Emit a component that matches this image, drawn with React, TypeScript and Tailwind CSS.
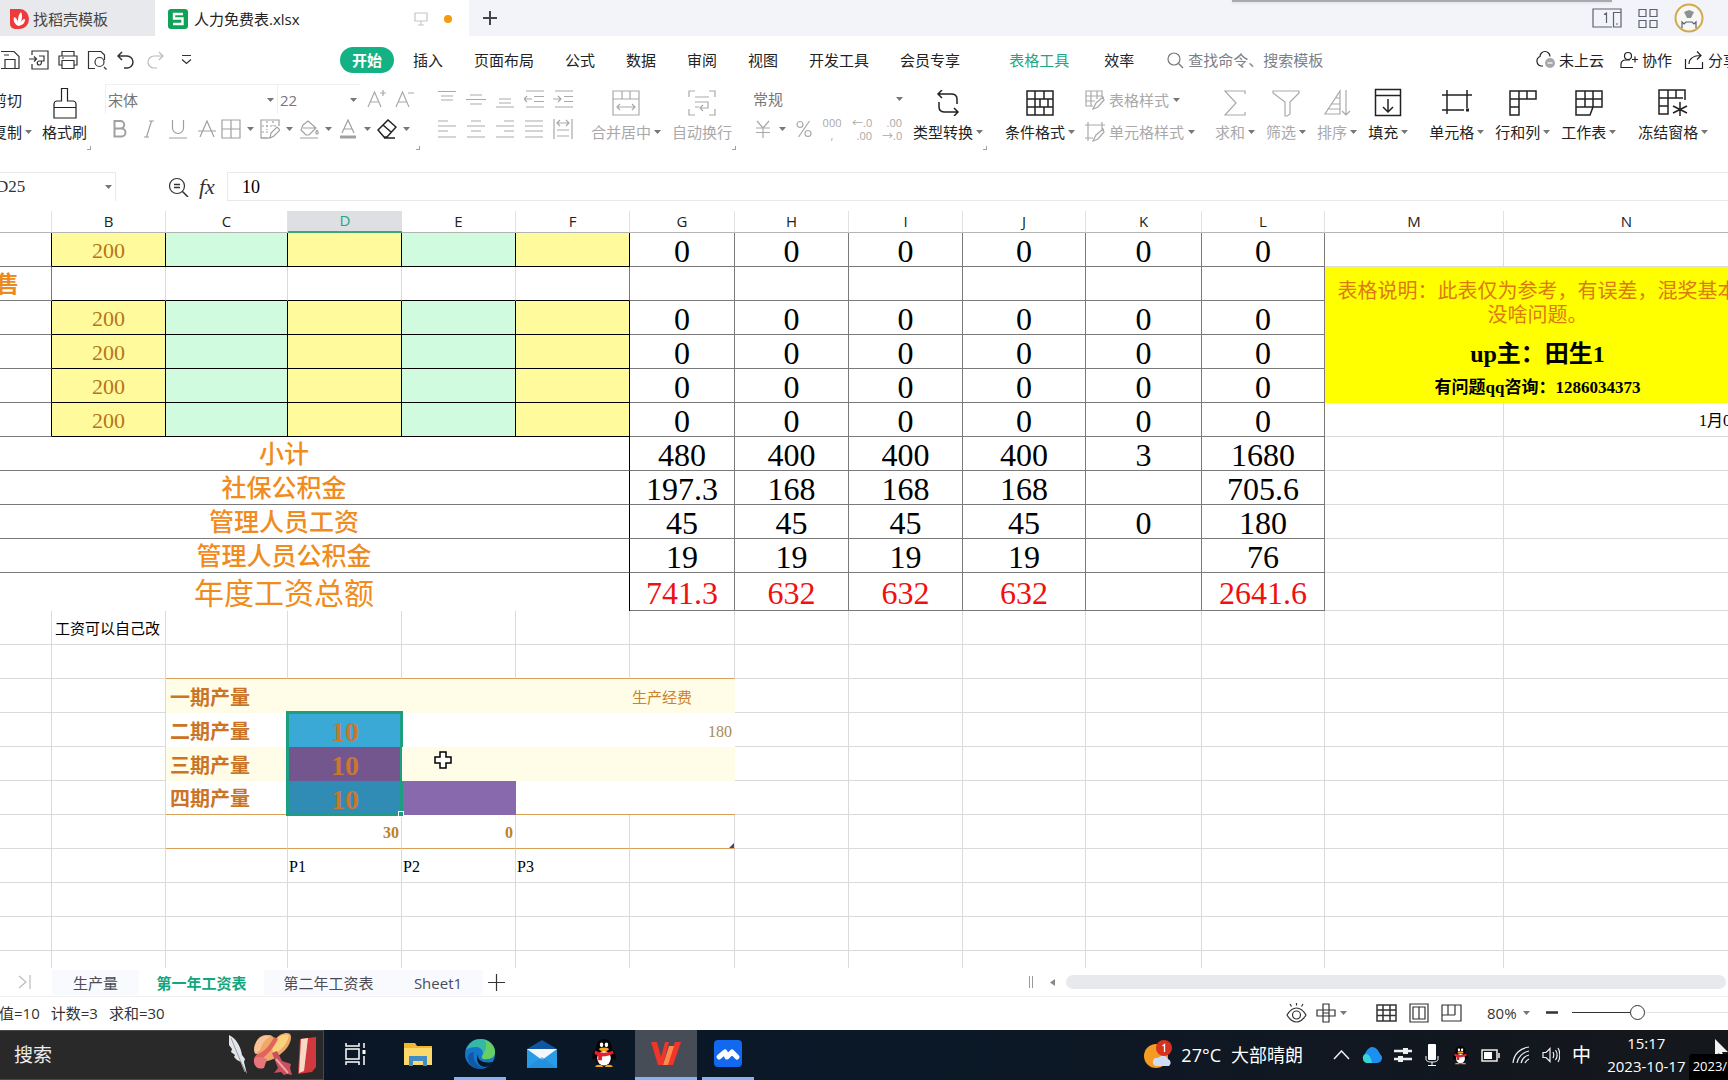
import { useState, type ReactNode } from "react";
import clsx from "clsx";

const Svg = ({
  w = 20,
  h = 20,
  children,
  className,
}: {
  w?: number;
  h?: number;
  children: ReactNode;
  className?: string;
}) => (
  <svg
    width={w}
    height={h}
    viewBox={`0 0 ${w} ${h}`}
    fill="none"
    stroke="currentColor"
    strokeWidth={1.2}
    className={clsx("shrink-0", className)}
    aria-hidden="true"
  >
    {children}
  </svg>
);

const Arrow = () => (
  <svg width="7" height="4" viewBox="0 0 7 4" className="shrink-0 text-[#777]" aria-hidden="true">
    <path d="M0 0h7L3.5 4z" fill="currentColor" />
  </svg>
);

const Tick = () => <span className="h-1 w-1 shrink-0 self-end border-r border-b border-gray-400" />;

/* ---------- title bar ---------- */

const TitleBar = () => (
  <header className="flex h-9 shrink-0 items-stretch overflow-hidden bg-[#f2f4fa]">
    <button className="flex w-[155px] shrink-0 items-center gap-1 bg-[#e8e9ed] pt-0.5 pl-[9px] text-[#444]">
      <Svg w={20} h={20}>
        <path d="M1 0h10a9 10 0 0 1 0 20H6a5 5 0 0 1-5-5z" fill="#f0393c" stroke="none" />
        <path
          d="M9.500 17C5 15 4 11 5 8c3 1 4 4 4 6 0-4 0-8 3-11 2 4 1 8-1 11 1-2 3-4 5-4 0 4-2 6-6.500 7z"
          fill="#fff"
          stroke="none"
        />
      </Svg>
      找稻壳模板
    </button>
    <button className="flex w-[314px] shrink-0 items-center bg-white pt-0.5 pl-[13px] text-[#222]">
      <Svg w={20} h={20}>
        <rect width="20" height="20" rx="3" fill="#10a256" stroke="none" />
        <path d="M15 5H6v4.500h8.500V15H5" stroke="#fff" strokeWidth="2.400" />
      </Svg>
      <span className="ml-1.5 flex-1 text-left">人力免费表.xlsx</span>
      <Svg w={14} h={14} className="text-[#c4c6cc]">
        <path d="M1 1h12v8H1zM4 13h6M7 9v4" />
      </Svg>
      <span className="mr-[17px] ml-4 h-2 w-2 rounded-full bg-[#f39c12]" />
    </button>
    <button aria-label="新建" className="ml-[14px] text-[#444]">
      <Svg w={14} h={14}>
        <path d="M7 0v14M0 7h14" strokeWidth="2" />
      </Svg>
    </button>
    <div className="flex flex-1 items-start justify-end">
      <div className="-mr-5 h-0.5 w-[380px] bg-[#a9a9ae] shadow" />
    </div>
    <div className="flex shrink-0 items-center gap-4 pr-6 text-[#5c6170]">
      <Svg w={30} h={20}>
        <path d="M20 19H1V1h28v3M12 6.500l2.500-1.500v10M21.500 4.500h7.500V19h-7.500zM24 16h2" />
      </Svg>
      <Svg w={20} h={20}>
        <path d="M1 1.500h7v7H1zM12 1.500h7v7h-7zM1 12.500h7v7H1zM12 12.500h7v7h-7z" />
      </Svg>
      <Svg w={30} h={30}>
        <circle cx="15" cy="15" r="13.500" fill="#f7f7f4" stroke="#d3a94e" strokeWidth="2" />
        <path d="M10 9l5-2 5 2-3 6h-4z" fill="#8d9196" stroke="none" />
        <path d="M8 25v-6l2 2 2-2h6l2 2 2-2v6" />
      </Svg>
    </div>
  </header>
);

/* ---------- menu row ---------- */

const MENU = [
  { label: "插入", ml: "ml-[19px]" },
  { label: "页面布局", ml: "ml-[31px]" },
  { label: "公式", ml: "ml-[31px]" },
  { label: "数据", ml: "ml-[31px]" },
  { label: "审阅", ml: "ml-[31px]" },
  { label: "视图", ml: "ml-[31px]" },
  { label: "开发工具", ml: "ml-[31px]" },
  { label: "会员专享", ml: "ml-[31px]" },
  { label: "表格工具", ml: "ml-[49px] text-[#1aa884]" },
  { label: "效率", ml: "ml-[35px]" },
];

const MenuRow = () => (
  <nav className="flex h-12 shrink-0 items-center overflow-hidden whitespace-nowrap text-[#222]">
    <div className="flex w-[340px] shrink-0 items-center gap-[9px] text-[#333]">
      <button aria-label="保存">
        <Svg>
          <path d="M1 1.500h13l5 5v12H1M5 18.500V9.500h10v9M4 5h5" />
        </Svg>
      </button>
      <button aria-label="输出为PDF">
        <Svg>
          <path d="M3 5V1h16v18H3v-5M0 9h7M5 6.500L7.500 9 5 11.500M10 6h5v5h-4.500c-3 0-3 4 0 4 2 0 2-2 2-4" />
        </Svg>
      </button>
      <button aria-label="打印">
        <Svg>
          <path d="M4 6V1.500h12V6M4 15H1V6h18v9h-3M4 10.500h12v8H4zM4 8h2" />
        </Svg>
      </button>
      <button aria-label="打印预览">
        <Svg>
          <path d="M8 18.500H1.500v-17H14l3.500 3.500v5M17 17l2.500 2.500" />
          <circle cx="12.500" cy="12" r="4.500" />
        </Svg>
      </button>
      <button aria-label="撤销">
        <Svg>
          <path d="M6 2L2 6l4 4M2 6h9a6 6 0 0 1 0 12H8" strokeWidth="1.500" />
        </Svg>
      </button>
      <button aria-label="恢复" className="text-[#bbb]">
        <Svg>
          <path d="M14 2l4 4-4 4M18 6H9a6 6 0 0 0 0 12h3" />
        </Svg>
      </button>
      <button aria-label="更多" className="ml-1">
        <Svg w={16} h={12}>
          <path d="M4 1.500h9M4 5.500l4.500 4 4.500-4" />
        </Svg>
      </button>
    </div>
    <button className="h-[26px] w-[54px] shrink-0 rounded-full bg-[#14b184] font-bold text-white">开始</button>
    {MENU.map((m) => (
      <button key={m.label} className={clsx("shrink-0", m.ml)}>
        {m.label}
      </button>
    ))}
    <label className="ml-[33px] flex flex-1 items-center gap-1 text-[#777]">
      <Svg w={17} h={17}>
        <circle cx="7" cy="7" r="6" />
        <path d="M11.500 11.500L16 16" />
      </Svg>
      <input
        className="w-[150px] outline-none placeholder:text-[#7b7f87]"
        placeholder="查找命令、搜索模板"
        aria-label="查找命令、搜索模板"
      />
    </label>
    <button className="flex shrink-0 items-center gap-1">
      <Svg>
        <path d="M8 16H6a5 5 0 0 1-1-9.500 5 5 0 0 1 10 0" />
        <circle cx="15" cy="13" r="5" fill="#a5a8ad" stroke="none" />
        <path d="M12.500 13h5" stroke="#fff" />
      </Svg>
      未上云
    </button>
    <button className="ml-4 flex shrink-0 items-center gap-1">
      <Svg w={18}>
        <circle cx="8" cy="6" r="3.500" />
        <path d="M13 17.500H1v-3c0-3 2-4.500 5-4.500h4M15 6.500v6M12 9.500h6" />
      </Svg>
      协作
    </button>
    <button className="ml-3 -mr-2.5 flex shrink-0 items-center gap-1">
      <Svg>
        <path d="M1.500 9v9.500h17V12M5 14c0-5 4-8.500 12-8.500M13 1.500l4 4-4 4" />
      </Svg>
      分享
    </button>
  </nav>
);

/* ---------- ribbon ---------- */

const BigButton = ({
  label,
  arrow = true,
  muted,
  className,
  children,
}: {
  label: string;
  arrow?: boolean;
  muted?: boolean;
  className?: string;
  children: ReactNode;
}) => (
  <button className={clsx("flex shrink-0 flex-col items-center", muted ? "text-[#a9a9a9]" : "text-[#222]", className)}>
    <span className="flex h-[38px] items-center">{children}</span>
    <span className="flex items-center gap-[3px]">
      {label}
      {arrow && <Arrow />}
    </span>
  </button>
);

const IconButton = ({ label, arrow, children }: { label: string; arrow?: boolean; children: ReactNode }) => (
  <button
    aria-label={label}
    className={clsx("flex shrink-0 items-center", arrow ? "w-[39px] gap-1.5" : "w-[29px] justify-center")}
  >
    {children}
    {arrow && <Arrow />}
  </button>
);

const DropDown = ({ label, value, className }: { label: string; value: string; className?: string }) => (
  <span className={clsx("flex h-[30px] shrink-0 items-center", className)}>
    <select aria-label={label} className="min-w-0 flex-1 appearance-none text-[#777] outline-none">
      <option>{value}</option>
    </select>
    <Arrow />
  </span>
);

const ALIGN = [
  { label: "顶端对齐", d: "M1 2.500h18M4 7h12M4 11h12" },
  { label: "垂直居中", d: "M4 6h12M0 10.500h20M4 15h12" },
  { label: "底端对齐", d: "M4 10h12M4 14h12M1 18h18" },
  { label: "减少缩进", d: "M2 2h18M10 7.500h10M10 12.500h10M2 18h18M0 10h8M3 7l-3 3 3 3" },
  { label: "增加缩进", d: "M2 2h18M11 7.500h9M11 12.500h9M2 18h18M0 10h8M5 7l3 3-3 3" },
  { label: "左对齐", d: "M1 2h10M1 7h18M1 12h10M1 18h18" },
  { label: "居中", d: "M5 2h10M1 7h18M5 12h10M1 18h18" },
  { label: "右对齐", d: "M9 2h10M1 7h18M9 12h10M1 18h18" },
  { label: "两端对齐", d: "M1 2h18M1 7h18M1 12h18M1 18h18" },
  { label: "分散对齐", d: "M1 0v20M19 0v20M4 4h12M7 1L4 4l3 3M13 1l3 3-3 3M4 11h12M4 17h12" },
];

const Ribbon = () => (
  <div className="flex h-[66px] shrink-0 items-stretch overflow-hidden whitespace-nowrap">
    <div className="flex w-[42px] shrink-0 flex-col gap-3 text-[#222]">
      <button className="-ml-2 pt-1.5 text-left">剪切</button>
      <button className="-ml-2 flex items-center gap-[3px]">
        复制
        <Arrow />
      </button>
    </div>
    <BigButton label="格式刷" arrow={false}>
      <Svg w={24} h={32}>
        <path d="M8.500 14V1.500h6V14h5.500c1.500 0 3 1.500 3 3v14H1V17c0-1.500 1.500-3 3-3zM1 20.500h22" />
      </Svg>
    </BigButton>
    <Tick />
    <div className="ml-[14px] w-[311px] shrink-0 text-[#a9a9a9]">
      <div className="flex items-center">
        <DropDown
          label="字体"
          value="宋体"
          className="w-[172px] border-t border-l border-[#f0f0f0] pr-[3px] pl-0.5"
        />
        <DropDown label="字号" value="22" className="w-[83px] border-t border-l border-[#f0f0f0] pr-[3px] pl-0.5" />
        <button aria-label="增大字号" className="ml-1.5">
          <Svg w={20}>
            <path d="M2 18L8.500 3 15 18M4.500 13h8M14 4h6M17 1v6" />
          </Svg>
        </button>
        <button aria-label="减小字号" className="ml-2">
          <Svg w={20}>
            <path d="M2 18L8.500 3 15 18M4.500 13h8M14 4h6" />
          </Svg>
        </button>
      </div>
      <div className="flex h-[30px] items-center text-[#a0a0a0]">
        <IconButton label="加粗">
          <Svg>
            <path d="M4.500 2h6a3.500 3.500 0 0 1 0 7.500h-6zM4.500 9.500h7a4 4 0 0 1 0 8h-7z" strokeWidth="2" />
          </Svg>
        </IconButton>
        <IconButton label="倾斜">
          <Svg>
            <path d="M10 2h5M5 18h5M12.500 2l-5 16" />
          </Svg>
        </IconButton>
        <IconButton label="下划线">
          <Svg>
            <path d="M4.500 1v8a5.500 5.500 0 0 0 11 0V1M1 19h18" />
          </Svg>
        </IconButton>
        <IconButton label="删除线">
          <Svg>
            <path d="M3 18L10 2l7 16M1 12h18" />
          </Svg>
        </IconButton>
        <span className="w-[3px]" />
        <IconButton label="边框" arrow>
          <Svg>
            <path d="M1 1h18v18H1zM10 1v18M1 10h18" />
          </Svg>
        </IconButton>
        <IconButton label="绘图边框" arrow>
          <Svg>
            <path d="M8 19H1V1h18v6" />
            <path d="M7 2v9M13 2v5M2 7h15M2 13h7" strokeDasharray="2 2" />
            <path d="M10 19l1-5 6-6 3 3-6 6zM1 19h10" />
          </Svg>
        </IconButton>
        <IconButton label="填充颜色" arrow>
          <Svg>
            <path d="M4 6l5-4 8 7-7 7H7l-5-5zM4 9h12M18 11c2 3 1 4 0 4s-2-1 0-4M1 19h18" />
          </Svg>
        </IconButton>
        <IconButton label="字体颜色" arrow>
          <Svg>
            <path d="M4 14L10 1l6 13M6 10h8" />
            <path d="M2 18h16" strokeWidth="3" />
          </Svg>
        </IconButton>
        <span className="text-[#222]">
          <IconButton label="清除" arrow>
            <Svg>
              <path d="M1 11L11 1l8 7-9 10H7zM6 6l8 7M7 19h11" strokeWidth="1.500" />
            </Svg>
          </IconButton>
        </span>
      </div>
    </div>
    <Tick />
    <div className="mt-[5px] ml-[17px] grid shrink-0 grid-cols-5 content-start gap-x-[9px] gap-y-2.5 text-[#a9a9a9]">
      {ALIGN.map((a) => (
        <button key={a.label} aria-label={a.label}>
          <Svg>
            <path d={a.d} />
          </Svg>
        </button>
      ))}
    </div>
    <BigButton label="合并居中" muted className="ml-[18px]">
      <Svg w={28} h={26}>
        <path d="M1 1h26v24H1zM1 9h26M10 1v8M18 1v8M5 17h18M8 14l-3 3 3 3M20 14l3 3-3 3" />
      </Svg>
    </BigButton>
    <BigButton label="自动换行" arrow={false} muted className="ml-[11px]">
      <Svg w={28} h={26}>
        <path d="M1 7V1h6M21 1h6v6M1 19v6h6M21 25h6v-6M7 7h14M7 12h13v6h-7M7 17h4M15 15l-3 3 3 3" />
      </Svg>
    </BigButton>
    <Tick />
    <div className="ml-[17px] w-[150px] shrink-0 text-[#a9a9a9]">
      <DropDown label="数字格式" value="常规" className="w-full" />
      <div className="flex h-[30px] items-center gap-2.5">
        <button aria-label="货币" className="flex items-center gap-1.5">
          <Svg w={20}>
            <path d="M4 2l6 7 6-7M10 9v10M3 9h14M3 13.500h14" />
          </Svg>
          <Arrow />
        </button>
        <button aria-label="百分比">
          <Svg w={16}>
            <circle cx="4" cy="5.500" r="3" />
            <circle cx="12" cy="14.500" r="3" />
            <path d="M13.500 2L2.500 18" />
          </Svg>
        </button>
        <button aria-label="千位分隔" className="w-5 text-[11px] leading-[13px]">
          000
          <br />,
        </button>
        <button aria-label="增加小数位" className="w-5 text-right text-[11px] leading-[13px]">
          ←.0
          <br />
          .00
        </button>
        <button aria-label="减少小数位" className="w-5 text-right text-[11px] leading-[13px]">
          .00
          <br />
          →.0
        </button>
      </div>
    </div>
    <BigButton label="类型转换" className="ml-2.5">
      <Svg w={24} h={26}>
        <path d="M6 0L2 4l4 4M2 4h13c4 0 6 2 6 5v5M18 26l4-4-4-4M22 22H9c-4 0-6-2-6-5v-5" strokeWidth="1.500" />
      </Svg>
    </BigButton>
    <Tick />
    <BigButton label="条件格式" className="ml-[18px]">
      <Svg w={28} h={26}>
        <path
          d="M1 1h26v24H1zM1 9h26M1 17h26M9 1v24M18 1v8M14 9v8M22 9v8M18 17v8"
          strokeWidth="1.500"
        />
      </Svg>
    </BigButton>
    <div className="ml-2.5 flex w-[110px] shrink-0 flex-col gap-3 text-[#a9a9a9]">
      <button className="flex items-center gap-1 pt-1.5">
        <Svg>
          <path d="M8 16H1V1h16v6M1 6h16M1 11h9M6 1v15M12 1v8M8 19l3-6 7-6 1 3-6 7z" />
        </Svg>
        表格样式
        <Arrow />
      </button>
      <button className="flex items-center gap-1">
        <Svg>
          <path d="M3 0v19M0 3h20M17 0v7M0 16h8M8 19l3-6 7-6 1 3-6 7z" />
        </Svg>
        单元格样式
        <Arrow />
      </button>
    </div>
    <BigButton label="求和" muted className="ml-5">
      <Svg w={24} h={28}>
        <path d="M22 5V2H2l11 12L2 26h20v-3" />
      </Svg>
    </BigButton>
    <BigButton label="筛选" muted className="ml-[11px]">
      <Svg w={28} h={28}>
        <path d="M1 2h26v2l-9 9v12l-3 2h-2V13L1 4z" />
      </Svg>
    </BigButton>
    <BigButton label="排序" muted className="ml-[11px]">
      <Svg w={28} h={28}>
        <path d="M17 2v23H2zM13 9h4M9 15h8M6 20h11M23 1v25M19 22l4 4 4-4" />
      </Svg>
    </BigButton>
    <BigButton label="填充" className="ml-[11px]">
      <Svg w={28} h={30}>
        <path d="M1.500 1.500h25v26h-25zM1.500 7.500h25M14 11v13M9 19l5 5 5-5" strokeWidth="1.500" />
      </Svg>
    </BigButton>
    <BigButton label="单元格" className="ml-[21px]">
      <Svg w={30} h={26}>
        <path d="M5 0v24M25 0v18M0 5h30M0 20h22" strokeWidth="1.500" />
        <path d="M24 20h3" strokeWidth="3" />
      </Svg>
    </BigButton>
    <BigButton label="行和列" className="ml-[11px]">
      <Svg w={28} h={26}>
        <path d="M1 1h26v8H10v16H1zM1 9h9M1 17h9M10 1v8M18 1v8" strokeWidth="1.500" />
      </Svg>
    </BigButton>
    <BigButton label="工作表" className="ml-[11px]">
      <Svg w={28} h={26}>
        <path d="M1 1h26v16H18l-3 8H1zM1 9h26M1 17h17M10 1v16M18 1v16" strokeWidth="1.500" />
      </Svg>
    </BigButton>
    <BigButton label="冻结窗格" className="ml-[22px]">
      <Svg w={30} h={28}>
        <path
          d="M27 11V1H1v24h9V1M1 9h24M1 17h9M18 1v8M22 13v14M15 17l14 7M29 17l-14 7"
          strokeWidth="1.500"
        />
      </Svg>
    </BigButton>
  </div>
);

const FormulaBar = () => (
  <div className="mt-[22px] mb-2.5 flex h-[29px] shrink-0 items-stretch text-[#333]">
    <label className="flex w-[116px] shrink-0 items-center overflow-hidden border-t border-r border-[#e9e9e9]">
      <input
        aria-label="名称框"
        defaultValue="D25"
        className="-ml-1 w-[109px] font-['Liberation_Serif',serif] text-[17px] outline-none"
      />
      <Arrow />
    </label>
    <button aria-label="浏览公式结果" className="ml-[52px]">
      <Svg w={21}>
        <circle cx="9" cy="9" r="7.500" />
        <path d="M14.500 14.500L20 20M6 7.500h6M6 10.500h6" strokeWidth="1.500" />
      </Svg>
    </button>
    <button className="ml-2.5 font-['Liberation_Serif',serif] text-[22px] italic">fx</button>
    <input
      aria-label="编辑栏"
      defaultValue="10"
      className="ml-3 min-w-0 flex-1 border border-r-0 border-[#e9e9e9] pl-3.5 font-['Liberation_Serif',serif] text-[18px] text-black outline-none"
    />
  </div>
);

/* ---------- sheet ---------- */

const COLUMNS = [
  { name: "A", w: "w-[113px]" },
  { name: "B", w: "w-[114px]" },
  { name: "C", w: "w-[122px]" },
  { name: "D", w: "w-[114px]" },
  { name: "E", w: "w-[114px]" },
  { name: "F", w: "w-[114px]" },
  { name: "G", w: "w-[105px]" },
  { name: "H", w: "w-[114px]" },
  { name: "I", w: "w-[114px]" },
  { name: "J", w: "w-[123px]" },
  { name: "K", w: "w-[116px]" },
  { name: "L", w: "w-[123px]" },
  { name: "M", w: "w-[179px]" },
  { name: "N", w: "w-[246px]" },
];

const light = "border-r border-b border-[#dadada]";
const dark = "border-r border-b border-[#7a7a7a]";
const black = "border-r border-b border-black";
const amber = "border-r border-b border-r-[#dadada] border-b-[#d9a05a]";

const Light = ({ count }: { count: number }) => (
  <>
    {Array.from({ length: count }, (_, i) => (
      <td key={i} className={light} />
    ))}
  </>
);

const Figures = ({ values, red }: { values: string[]; red?: boolean }) => (
  <>
    {values.map((v, i) => (
      <td
        key={i}
        className={clsx(dark, "text-center text-[32px] leading-[30px]", red ? "text-[#f01010]" : "text-black")}
      >
        {v}
      </td>
    ))}
  </>
);

const ZEROS = ["0", "0", "0", "0", "0", "0"];

// one staff row: base pay in B, then the alternating input cells
const StaffRow = ({ children }: { children?: ReactNode }) => (
  <tr className="h-[34px]">
    <td className="border-r border-b border-r-black border-b-[#7a7a7a]" />
    <td className={clsx(black, "bg-[#fffb9c] text-center text-[22px] leading-[22px] text-[#b8741a]")}>200</td>
    <td className={clsx(black, "bg-[#d0fbdf]")} />
    <td className={clsx(black, "bg-[#fffb9c]")} />
    <td className={clsx(black, "bg-[#d0fbdf]")} />
    <td className={clsx(black, "bg-[#fffb9c]")} />
    <Figures values={ZEROS} />
    {children}
  </tr>
);

const SUMMARY = [
  { label: "小计", values: ["480", "400", "400", "400", "3", "1680"] },
  { label: "社保公积金", values: ["197.3", "168", "168", "168", "", "705.6"] },
  { label: "管理人员工资", values: ["45", "45", "45", "45", "0", "180"] },
  { label: "管理人员公积金", values: ["19", "19", "19", "19", "", "76"] },
];

const periodLabel = "pl-1 text-[20px] leading-5 font-bold text-[#cb7426]";
const picked = "text-center text-[28px] leading-7 font-bold text-[#c87830]";

const CellCursor = () => (
  <svg className="absolute top-1 left-8" width="18" height="18" viewBox="0 0 18 18" aria-hidden="true">
    <path d="M6 1h6v5h5v6h-5v5H6v-5H1V6h5z" fill="#fff" stroke="#000" strokeWidth="1.500" />
  </svg>
);

const Sheet = () => (
  <main className="min-h-0 flex-1 overflow-hidden font-['Liberation_Serif','Noto_Sans_CJK_SC',serif]">
    <table className="-ml-[61px] w-[1811px] table-fixed border-separate border-spacing-0">
      <colgroup>
        {COLUMNS.map((c) => (
          <col key={c.name} className={c.w} />
        ))}
      </colgroup>
      <thead>
        <tr className="h-[22px] font-['Open_Sans',sans-serif] text-[15px] leading-[18px] text-[#222]">
          {COLUMNS.map((c) => (
            <th
              key={c.name}
              className={clsx(
                "pb-0.5 text-center font-normal",
                c.name === "D"
                  ? "border-b-2 border-[#3fa877] bg-[#dedfe2] text-[#21a687]"
                  : "border-r border-b border-r-[#e2e2e2] border-b-[#b4b4b4]",
              )}
            >
              {c.name}
            </th>
          ))}
        </tr>
      </thead>
      <tbody className="[&_td]:pt-[3px] [&_td]:whitespace-nowrap">
        <StaffRow>
          <Light count={2} />
        </StaffRow>
        <tr className="h-[34px]">
          <td className={clsx(dark, "pl-0.5 text-center text-[23px] leading-6 font-bold text-[#ec8a1c]")}>销售</td>
          {["B", "C", "D", "E"].map((c) => (
            <td key={c} className="border-r border-b border-r-[#dadada] border-b-black" />
          ))}
          <td className="border-r border-b border-r-[#7a7a7a] border-b-black" />
          <Figures values={["", "", "", "", "", ""]} />
          <td
            colSpan={2}
            rowSpan={2}
            className="bg-[#ffff00] text-center align-middle text-[20px] leading-6 text-[#dd7a10]"
          >
            表格说明：此表仅为参考，有误差，混奖基本
            <br />
            没啥问题。
          </td>
        </tr>
        <StaffRow />
        <StaffRow>
          <td colSpan={2} className="bg-[#ffff00] text-center text-[24px] leading-6 font-bold text-black">
            up主：田生1
          </td>
        </StaffRow>
        <StaffRow>
          <td colSpan={2} className="bg-[#ffff00] text-center text-[17px] leading-5 font-bold text-black">
            有问题qq咨询：1286034373
          </td>
        </StaffRow>
        <StaffRow>
          <td className={light} />
          <td className={clsx(light, "pr-0.5 text-right text-[16px] leading-5 text-black")}>1月0日</td>
        </StaffRow>
        {SUMMARY.map((s) => (
          <tr key={s.label} className="h-[34px]">
            <td
              colSpan={6}
              className="border-r border-b border-r-black border-b-[#7a7a7a] text-center text-[25px] leading-7 font-medium text-[#f08c1e]"
            >
              {s.label}
            </td>
            <Figures values={s.values} />
            <Light count={2} />
          </tr>
        ))}
        <tr className="h-[38px]">
          <td colSpan={6} className="border-r border-black text-center text-[30px] leading-8 text-[#f08c1e]">
            年度工资总额
          </td>
          <Figures red values={["741.3", "632", "632", "632", "", "2641.6"]} />
          <Light count={2} />
        </tr>
        <tr className="h-[34px]">
          <td className={light} />
          <td className={clsx(light, "pl-[3px] text-[15px] leading-5 text-black")}>工资可以自己改</td>
          <Light count={12} />
        </tr>
        <tr className="h-[34px]">
          <Light count={2} />
          {["C", "D", "E", "F", "G"].map((c) => (
            <td key={c} className={amber} />
          ))}
          <Light count={7} />
        </tr>
        <tr className="h-[34px]">
          <Light count={2} />
          <td className={clsx(periodLabel, "bg-[#fffde8]")}>一期产量</td>
          <td colSpan={3} className="bg-[#fffde8]" />
          <td className="bg-[#fffde8] pl-0.5 text-[15px] leading-5 text-[#d08028]">生产经费</td>
          <Light count={7} />
        </tr>
        <tr className="h-[34px]">
          <Light count={2} />
          <td className={periodLabel}>二期产量</td>
          <td className={clsx(picked, "relative bg-[#3ba9d5]")}>
            10
            <div className="absolute -top-0.5 -left-0.5 h-[105px] w-[117px] border-[3px] border-[#1b9f80]" />
            <div className="absolute top-[98px] left-[110px] h-1.5 w-1.5 border border-white bg-[#1b9f80]" />
          </td>
          <td colSpan={2} />
          <td className="pr-[3px] text-right text-[16px] leading-5 text-[#a88a5c]">180</td>
          <Light count={7} />
        </tr>
        <tr className="h-[34px]">
          <Light count={2} />
          <td className={clsx(periodLabel, "bg-[#fffde8]")}>三期产量</td>
          <td className={clsx(picked, "bg-[#74568f]")}>10</td>
          <td colSpan={3} className="relative bg-[#fffde8]">
            <CellCursor />
          </td>
          <Light count={7} />
        </tr>
        <tr className="h-[34px]">
          <Light count={2} />
          <td className={clsx(periodLabel, "border-b border-[#d9a05a]")}>四期产量</td>
          <td className={clsx(picked, "bg-[#308bb5]")}>10</td>
          <td className="bg-[#8869ad]" />
          <td colSpan={2} className="border-b border-[#d9a05a]" />
          <Light count={7} />
        </tr>
        <tr className="h-[34px] text-right text-[16px] leading-5 font-bold text-[#bf8024]">
          <Light count={2} />
          <td className={amber} />
          <td className={clsx(amber, "pr-0.5")}>30</td>
          <td className={clsx(amber, "pr-0.5")}>0</td>
          <td className={amber} />
          <td className={clsx(amber, "relative")}>
            <svg className="absolute right-0 bottom-0" width="5" height="5" viewBox="0 0 5 5" aria-hidden="true">
              <path d="M5 0v5H0z" fill="#47476a" />
            </svg>
          </td>
          <Light count={7} />
        </tr>
        <tr className="h-[34px]">
          <Light count={3} />
          {["P1", "P2", "P3"].map((p) => (
            <td key={p} className={clsx(light, "pl-px text-[16px] leading-5 text-black")}>
              {p}
            </td>
          ))}
          <Light count={8} />
        </tr>
        {[0, 1, 2].map((r) => (
          <tr key={r} className="h-[34px]">
            <Light count={14} />
          </tr>
        ))}
      </tbody>
    </table>
  </main>
);

/* ---------- sheet tabs and status bar ---------- */

const TABS = [
  { name: "生产量", w: "w-[87px]" },
  { name: "第一年工资表", w: "w-[125px]" },
  { name: "第二年工资表", w: "w-[129px]" },
  { name: "Sheet1", w: "w-[90px]" },
];

const SheetTabs = () => {
  const [active, setActive] = useState("第一年工资表");
  return (
    <div className="flex h-[29px] shrink-0 items-center overflow-hidden border-b border-[#f0f0f0] whitespace-nowrap">
      <button aria-label="最后一个工作表" className="ml-[18px] w-[34px] shrink-0 text-[#bbb]">
        <Svg w={13} h={14}>
          <path d="M1 1l7 6-7 6M12 0v14" />
        </Svg>
      </button>
      {TABS.map((t) => (
        <button
          key={t.name}
          onClick={() => setActive(t.name)}
          className={clsx(
            "h-[25px] shrink-0 pt-0.5",
            t.w,
            t.name === active ? "font-bold text-[#12a67c]" : "bg-[#f9fafd] text-[#4a4a58]",
          )}
        >
          {t.name}
        </button>
      ))}
      <button aria-label="新建工作表" className="ml-[5px] shrink-0 text-[#333]">
        <Svg w={17} h={17}>
          <path d="M8.500 0v17M0 8.500h17" />
        </Svg>
      </button>
      <div className="flex-1" />
      <span className="h-3 w-1 border-x border-[#999]" />
      <div className="ml-[17px] flex w-[678px] shrink-0 items-center gap-[11px]">
        <button aria-label="向左滚动" className="text-[#888]">
          <svg width="5" height="7" viewBox="0 0 5 7" aria-hidden="true">
            <path d="M5 0v7L0 3.500z" fill="currentColor" />
          </svg>
        </button>
        <div className="mr-0.5 h-3.5 flex-1 rounded-full bg-[#e7e9ec]" />
      </div>
    </div>
  );
};

const StatusBar = () => (
  <footer className="flex h-[33px] shrink-0 items-center overflow-hidden pb-0.5 whitespace-nowrap text-[#333]">
    <div className="-ml-[31px] flex gap-[11px]">
      <span>平均值=10</span>
      <span>计数=3</span>
      <span>求和=30</span>
    </div>
    <div className="flex-1" />
    <div className="flex w-[442px] shrink-0 items-center">
      <button aria-label="护眼模式">
        <Svg w={21} h={20}>
          <path d="M1 12c3-5 6-7 9.500-7s6.500 2 9.500 7c-3 5-6 7-9.500 7S4 17 1 12zM10.500 0v2.500M4 1l1.500 2.500M17 1l-1.500 2.500" />
          <circle cx="10.500" cy="12" r="4" />
        </Svg>
      </button>
      <button aria-label="阅读模式" className="ml-[9px] flex items-center gap-1">
        <Svg w={20} h={20}>
          <path d="M7 1h6v18H7zM1 7h18v6H1zM7 10h6" />
        </Svg>
        <Arrow />
      </button>
      <button aria-label="普通视图" className="ml-[29px]">
        <Svg w={21} h={18}>
          <path d="M1 1h19v16H1zM1 6h19M1 11.500h19M7 1v16M14 1v16" strokeWidth="1.500" />
        </Svg>
      </button>
      <button aria-label="分页预览" className="ml-3">
        <Svg w={20} h={20}>
          <path d="M1 1h18v18H1zM4 4h12v12H4zM10 4v12" />
        </Svg>
      </button>
      <button aria-label="页面布局视图" className="ml-3">
        <Svg w={21} h={18}>
          <path d="M1 1h19v16H1zM7 1v10M14 1v10M1 11h13" />
        </Svg>
      </button>
      <select aria-label="显示比例" className="ml-[25px] w-9 appearance-none text-[15px] outline-none">
        <option>80%</option>
      </select>
      <Arrow />
      <button aria-label="缩小" className="ml-4 text-[#333]">
        <Svg w={12} h={3}>
          <path d="M0 1.500h12" strokeWidth="2.500" />
        </Svg>
      </button>
      <input
        type="range"
        aria-label="缩放"
        defaultValue={41}
        className="ml-3.5 h-4 min-w-0 flex-1 appearance-none bg-transparent [&::-webkit-slider-runnable-track]:h-px [&::-webkit-slider-runnable-track]:bg-[linear-gradient(to_right,#333_42%,#e3e3e3_42%)] [&::-webkit-slider-thumb]:-mt-[7px] [&::-webkit-slider-thumb]:h-[15px] [&::-webkit-slider-thumb]:w-[15px] [&::-webkit-slider-thumb]:appearance-none [&::-webkit-slider-thumb]:rounded-full [&::-webkit-slider-thumb]:border [&::-webkit-slider-thumb]:border-[#333] [&::-webkit-slider-thumb]:bg-white"
      />
    </div>
  </footer>
);

/* ---------- taskbar ---------- */

const Penguin = ({ w, h }: { w: number; h: number }) => (
  <svg width={w} height={h} viewBox="0 0 26 30" className="shrink-0" aria-hidden="true">
    <path
      d="M13 0c5 0 8 4 8 9 3 4 5 8 4 12-1 1-2 0-3-2 0 5-4 9-9 9s-9-4-9-9c-1 2-2 3-3 2-1-4 1-8 4-12 0-5 3-9 8-9z"
      fill="#050505"
    />
    <ellipse cx="13" cy="20" rx="7" ry="7.500" fill="#fff" />
    <ellipse cx="10.500" cy="6" rx="1.800" ry="2.500" fill="#fff" />
    <ellipse cx="15.500" cy="6" rx="1.800" ry="2.500" fill="#fff" />
    <ellipse cx="13" cy="10.500" rx="5" ry="1.800" fill="#f7a21b" />
    <path d="M4 12c6 3 12 3 18 0l1 3c-4 2-8 3-12 3v4H7v-5c-1 0-3-1-4-2z" fill="#e3202c" />
    <path d="M4 29c0-3 8-3 8 0zM14 29c0-3 8-3 8 0z" fill="#f7a21b" />
  </svg>
);

const TaskButton = ({
  label,
  open,
  active,
  children,
}: {
  label: string;
  open?: boolean;
  active?: boolean;
  children: ReactNode;
}) => (
  <button
    aria-label={label}
    className={clsx("flex w-[62px] shrink-0 flex-col items-center justify-between", active && "bg-[#464d57]")}
  >
    <span className="flex flex-1 items-center">{children}</span>
    <span className={clsx("h-[3px]", active ? "w-full" : "w-[52px]", open && "bg-[#86b3f5]")} />
  </button>
);

const Taskbar = () => (
  <div className="flex h-[50px] shrink-0 items-stretch overflow-hidden bg-linear-to-r from-[#0b1626] via-[#0a1828] to-[#15171b] whitespace-nowrap text-white">
    <label className="mr-px flex w-[324px] shrink-0 items-center border border-l-0 border-[#48494b] bg-[#292929] pl-3.5">
      <input
        aria-label="搜索"
        placeholder="搜索"
        className="w-[214px] text-[19px] outline-none placeholder:text-[#ececec]"
      />
      <svg width="90" height="44" viewBox="0 0 90 44" aria-hidden="true">
        <path d="M1 2c7 3 12 12 13 20l3 4-1 3 3 12-6-12-4-2-3-3 1-2-4-3 1-3-3-4z" fill="#e3e5ec" />
        <path d="M3 5l14 34" stroke="#9b9da6" />
        <path d="M26 18C26 8 32 1 40 2c4 0 6 2 7 5 5-7 12-8 15-6 3 4-1 13-7 18-6 6-13 9-20 10z" fill="#f0a868" />
        <path d="M44 10c5-7 13-10 17-8-1 8-8 16-16 19z" fill="#f9d27c" />
        <path d="M28 10c3-6 9-9 14-6-5 2-8 7-10 13l-5 4c-1-4-1-8 1-11z" fill="#f7c39b" />
        <path d="M46 4l4 2c-4 8-10 16-18 21l-5 1c-2-3 0-5 3-7 7-3 12-9 16-17z" fill="#e0655c" />
        <path d="M26 26c3-3 8-2 13 0l-3 9c-6 2-11-2-10-9z" fill="#e8757a" />
        <path d="M44 20l5-2 5 10 9 3-1 4 2 7-5-1-3 1-3-3-7 1 4-5z" fill="#c9505f" />
        <path d="M48 26l12 14" stroke="#f0a0a0" strokeWidth="2" />
        <path d="M72 6l16-2v30l-4 5-14 2z" fill="#d2393f" />
        <path d="M73 6l7-1-4 33-5 2z" fill="#f8d9c4" />
      </svg>
    </label>
    <TaskButton label="任务视图">
      <Svg w={22} h={22}>
        <path d="M1 0v3h13V0M1 6h13v10H1zM1 22v-3h13v3M19 0v5M19 13v9" strokeWidth="1.500" />
        <path d="M19 7v4" strokeWidth="3" />
      </Svg>
    </TaskButton>
    <TaskButton label="文件资源管理器">
      <svg width="28" height="24" viewBox="0 0 28 24" aria-hidden="true">
        <path d="M0 1h11l2 3h15v19H0z" fill="#f3b72f" />
        <path d="M0 6h28v17H0z" fill="#fbd96a" />
        <path d="M5 24V14h18v10h-4v-5H9v5z" fill="#3f8cc7" />
      </svg>
    </TaskButton>
    <TaskButton label="Microsoft Edge" open>
      <svg width="30" height="30" viewBox="0 0 30 30" aria-hidden="true">
        <circle cx="15" cy="15" r="15" fill="#1577c8" />
        <path d="M1 11C4 3 10 0 16 0c8 0 14 6 14 13 0 5-4 7-8 7-4 1-6-1-5-3 3-4-1-9-6-9-4 0-8 1-10 3z" fill="#35b9a4" />
        <path d="M20 1c6 2 10 7 10 12 0 5-4 7-8 7-4 1-6-1-5-3 3-4 6-9 3-16z" fill="#66ce63" />
        <path d="M9 13c-2 8 3 15 12 16-8 3-16-1-18-8-1-5 2-8 6-8z" fill="#1159a8" />
        <path d="M13 15c-1 6 5 10 14 8 1 0 1 1 0 2-8 7-18 0-14-10z" fill="#0b1626" />
      </svg>
    </TaskButton>
    <TaskButton label="邮件">
      <svg width="30" height="28" viewBox="0 0 30 28" aria-hidden="true">
        <path d="M0 9L15 0l15 9v10H0z" fill="#1055a0" />
        <path d="M0 9h30v19H0z" fill="#2a9be6" />
        <path d="M0 9h30L15 20z" fill="#f4f8fc" />
        <path d="M0 28l15-11 15 11z" fill="#2089d8" opacity=".6" />
      </svg>
    </TaskButton>
    <TaskButton label="QQ">
      <Penguin w={26} h={29} />
    </TaskButton>
    <TaskButton label="WPS Office" open active>
      <svg width="30" height="25" viewBox="0 0 30 25" aria-hidden="true">
        <path d="M0 1h6l4 15 4-15h4l-6 23H7z" fill="#f0352b" />
        <path d="M22 6l2-5h6l-8 23h-6z" fill="#f0352b" />
        <path d="M12 24l6-19h5l-6 19z" fill="#ff8a4c" />
      </svg>
    </TaskButton>
    <TaskButton label="腾讯会议" open>
      <svg width="28" height="27" viewBox="0 0 28 27" aria-hidden="true">
        <rect width="28" height="27" rx="4" fill="#1268ee" />
        <path
          d="M5 17l6-5 2 5 5-5 5 5"
          fill="none"
          stroke="#fff"
          strokeWidth="5"
          strokeLinecap="round"
          strokeLinejoin="round"
        />
      </svg>
    </TaskButton>
    <div className="flex-1" />
    <button className="flex items-center text-[18px]">
      <svg width="30" height="30" viewBox="0 0 30 30" aria-hidden="true">
        <circle cx="13" cy="16" r="12" fill="#f59a22" />
        <path d="M13 26a4 4 0 0 1 2-8 6 6 0 0 1 10 1 4 4 0 0 1 1 7z" fill="#cfdcf7" />
        <circle cx="21" cy="8" r="8" fill="#d6321f" />
        <path d="M19.500 6l2-1.500V12" stroke="#fff" strokeWidth="1.300" fill="none" />
      </svg>
      <span className="ml-2">27°C</span>
      <span className="ml-2.5">大部晴朗</span>
    </button>
    <div className="ml-[30px] flex w-[395px] shrink-0 items-center">
      <div className="flex items-center gap-3 text-[#eee]">
        <Svg w={17} h={10}>
          <path d="M1 9l7.500-8L16 9" strokeWidth="1.500" />
        </Svg>
        <svg width="20" height="17" viewBox="0 0 20 17" aria-hidden="true">
          <path d="M5 16a5 5 0 0 1-2-9C5 2 8 0 10 0c4 0 6 3 8 7a5 5 0 0 1-3 9z" fill="#1d8ff0" />
          <path d="M5 16a5 5 0 0 1-2-9C6 6 9 10 10 16z" fill="#35d4d9" />
        </svg>
        <Svg w={18} h={16}>
          <path d="M0 4h18M0 12h18" strokeWidth="2.500" />
          <path d="M9 4h5M4 12h5" strokeWidth="6" />
        </Svg>
        <svg width="14" height="22" viewBox="0 0 14 22" className="mx-px" aria-hidden="true">
          <rect x="3" width="8" height="16" rx="1" fill="#fff" />
          <path d="M1 12v3c0 2 2 3 6 3s6-1 6-3v-3M7 18v4M3 21.500h8" fill="none" stroke="#fff" />
        </svg>
        <Penguin w={17} h={19} />
        <Svg w={19} h={13}>
          <path d="M1 1h15v11H1zM18 4v5" strokeWidth="1.500" />
          <path d="M3 3h8v7H3z" fill="#fff" stroke="none" />
        </Svg>
        <Svg w={18} h={18}>
          <path d="M1 17C2 8 8 2 17 1M5 17C6 11 11 6 17 5M9 17c1-4 4-7 8-8M13 17c1-2 2-3 4-4" />
        </Svg>
        <Svg w={18} h={16}>
          <path d="M1 5.500h3l4-4v13l-4-4H1zM11 5c1 2 1 4 0 6M13.500 3c2 3 2 7 0 10M16 1c2.500 4 2.500 10 0 14" />
        </Svg>
        <span className="text-[19px] leading-6 text-white">中</span>
      </div>
      <div className="ml-[13px] w-[86px] text-center leading-[23px]">
        <div>15:17</div>
        <div>2023-10-17</div>
      </div>
      <div className="flex w-10 flex-col items-end self-stretch overflow-hidden">
        <svg width="14" height="24" viewBox="0 0 14 24" className="mt-2" aria-hidden="true">
          <path d="M1 1v18l4-4 3 7 3-1-3-7h6z" fill="#f2f2f2" />
        </svg>
        <span className="-mt-2 w-full flex-1 rounded-tl bg-black pl-1 text-[13px] leading-6">2023/10/17</span>
      </div>
    </div>
  </div>
);

const App = () => {
  return (
    <div className="flex h-screen flex-col overflow-hidden bg-white font-['Open_Sans','Noto_Sans_CJK_SC',sans-serif] text-[15px] leading-5">
      <TitleBar />
      <MenuRow />
      <Ribbon />
      <FormulaBar />
      <Sheet />
      <SheetTabs />
      <StatusBar />
      <Taskbar />
    </div>
  );
};

export default App;
